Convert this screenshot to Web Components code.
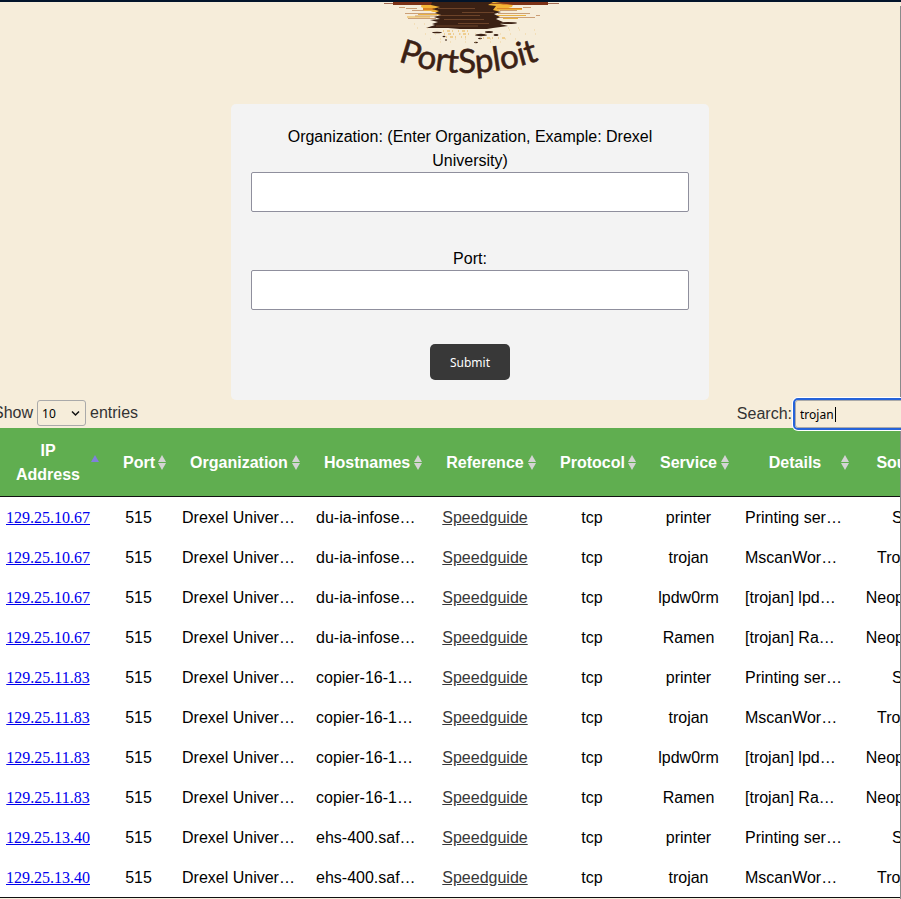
<!DOCTYPE html>
<html lang="en">
<head>
<meta charset="utf-8">
<title>PortSploit</title>
<style>
html { background: #f6edda; overflow: hidden; }
body { margin: 0; font-family: "Liberation Sans", Arial, sans-serif; font-size: 16px; line-height: 24px; color: #000; }
</style>
</head>
<body>
<port-page>
  <port-logo slot="brand"></port-logo>
  <lookup-form slot="form"></lookup-form>
  <results-table slot="results"></results-table>
</port-page>
<script>
function define(name, html, setup) {
  const template = document.createElement("template");
  template.innerHTML = html;
  customElements.define(name, class extends HTMLElement {
    constructor() {
      super();
      this.attachShadow({ mode: "open" }).append(template.content.cloneNode(true));
      if (setup) setup(this.shadowRoot);
    }
  });
}

define("port-page", `
<style>
:host { display: block; position: relative; overflow: hidden; min-height: 100vh; border-top: 2px solid #02142a; box-sizing: border-box; }
:host::after { content: ""; position: absolute; top: 4px; right: 0; bottom: 0; width: 1px; background: #8a8a8a; }
header { display: flex; flex-direction: column; align-items: center; margin-right: -39px; }
main { margin: 0 -51px 0 -9px; }
</style>
<header><slot name="brand"></slot><slot name="form"></slot></header>
<main><slot name="results"></slot></main>`);

define("port-logo", `
<style>
:host { display: block; height: 102px; }
svg { display: block; }
text { font-family: Lato, sans-serif; font-size: 33px; font-weight: 400; fill: #3b2114; stroke: #3b2114; stroke-width: 0.6; }
</style>
<svg width="200" height="86" viewBox="370 2 200 86" role="img" aria-label="PortSploit">
  <path fill="#f3b536" d="M422 2H514L512 7 501 10 496 12H433L421 7Z"/>
  <path fill="#dc8525" d="M425 2H437L430 4H421ZM506 3H519V5H500ZM423 8H434V10H423ZM497 8H522V9H497Z"/>
  <path fill="#7b3116" d="M393 2H432V5H393ZM495 2H548V5H513Z"/>
  <path stroke="#7b3116" stroke-width=".7" fill="none" d="M384 3.500H559"/>
  <path stroke="#c08a5c" fill="none" stroke-width=".8" d="M399 7.500H405M406 8.500H417M523 7.500H531M405 13.500H439M498 13.500H530M412 10.500H427M500 10.500H517M408 18.500H436M498 17.500H535M415 16H437M536 15.500H540"/>
  <path stroke="#e9b242" fill="none" d="M424 10.500H436M497 9.500H522M418 14.500H440M497 15.500H526M407 17H430M503 18.500H518"/>
  <path fill="#3b2114" d="M432 2H493L488 5 496 6 493 10 501 12 494 14 500 17 496 19 503 22 500 24 508 26 493 28 487 29H460L448 28 426 28 435 25 432 24 438 22 430 20 440 19 434 17 441 15 435 13 439 11 432 9 440 7 431 5Z"/>
  <g fill="#3b2114"><ellipse cx="508" cy="23" rx="9" ry="1"/><ellipse cx="437" cy="32.500" rx="5" ry=".8"/><ellipse cx="481" cy="35" rx="6" ry="1.200"/><ellipse cx="489" cy="32" rx="4" ry="1"/><ellipse cx="496" cy="35" rx="2.500" ry="1"/><ellipse cx="444" cy="36.500" rx="1.500" ry=".7"/><ellipse cx="446" cy="40" rx="1" ry=".8"/><ellipse cx="480" cy="38.500" rx="2" ry=".7"/><ellipse cx="476" cy="42.500" rx="2" ry=".7"/></g>
  <path stroke="#b97949" fill="none" stroke-width=".4" d="M438 8.500H475M439 15.500H480M444 19.500H484M436 26H478M462 12.500H494M458 23.500H489"/>
  <g stroke="#edc478" fill="none"><path stroke-width="1.500" stroke-dasharray="1 3 3 2 1 5" d="M443 31H472M444 34H470M446 37H466M483 38H505"/><path stroke-width=".7" stroke-dasharray="1 9 1 14" d="M414 24H433M417 28H430M508 28H530M425 34H540M430 39H523M440 42H515M509 30H542"/></g>
  <path id="arc" fill="none" d="M398 61Q469 86 546 58"/>
  <text><textPath href="#arc">PortSploit</textPath></text>
</svg>`);

define("lookup-form", `
<style>
:host { display: block; width: 478px; max-width: 100%; }
form { display: flex; flex-direction: column; gap: 34px; align-items: center; padding: 20px; background: #f3f3f3; border-radius: 5px; text-align: center; }
div { align-self: stretch; }
div + div { margin-top: 0; }
label { display: block; padding: 1px 20px 0; margin-bottom: -1px; }
input { display: block; width: 100%; height: 40px; box-sizing: border-box; border: 1px solid #8f8f9d; border-radius: 2px; background: #fff; padding: 0 10px; font: 12px "Noto Sans", sans-serif; }
button { height: 36px; padding: 0 20px; border: 0; border-radius: 5px; background: #383838; color: #fff; font: 12px "Noto Sans", sans-serif; }
</style>
<form>
  <div><label for="org">Organization: (Enter Organization, Example: Drexel University)</label><input id="org" type="text"></div>
  <div><label for="port">Port:</label><input id="port" type="text"></div>
  <button type="button">Submit</button>
</form>`);

define("sort-icon", `
<style>:host { display: block; width: 8px; height: 15px; } svg { display: block; }
path { fill: #d4d4d4; } :host([asc]) path { fill: #8080dd; } :host([asc]) .down { display: none; }</style>
<svg width="8" height="15" viewBox="0 0 8 15" aria-hidden="true"><path d="M0 7L4 0 8 7Z"/><path class="down" d="M0 8H8L4 15Z"/></svg>`);

const columns = [["IP Address", 114], ["Port", 67], ["Organization", 134], ["Hostnames", 122], ["Reference", 114], ["Protocol", 100], ["Service", 93], ["Details", 120], ["Source", 97]];
const hosts = [["129.25.10.67", "du-ia-infose…", 4], ["129.25.11.83", "copier-16-1…", 4], ["129.25.13.40", "ehs-400.saf…", 2]];
const services = [["printer", "Printing ser…", "SG"], ["trojan", "MscanWor…", "Trojans"], ["lpdw0rm", "[trojan] lpd…", "Neophasis"], ["Ramen", "[trojan] Ra…", "Neophasis"]];

define("results-table", `
<style>
:host { display: block; }
.tools { display: flex; justify-content: space-between; height: 28px; color: #333; }
.tools label { display: flex; align-items: center; height: 26px; }
.length { padding-left: 2px; gap: 4px; }
select { width: 49px; height: 26px; box-sizing: border-box; padding: 0 4px; border: 1px solid #aaa; border-radius: 3px; background: transparent; color: #000; font: 12px "Noto Sans", sans-serif; appearance: none; }
.pick { position: relative; display: block; height: 26px; }
.pick svg { position: absolute; right: 6px; top: 10px; pointer-events: none; }
.tools .search { height: 28px; gap: 3px; }
.find { position: relative; display: block; height: 28px; z-index: 1; }
.find input { display: block; width: 157px; height: 28px; box-sizing: border-box; padding: 0 4px; border: 1px solid #aaa; border-radius: 3px; outline: 2px solid #2563d9; box-shadow: 0 0 0 3px #fff; background: #f6edda; font: 12px "Noto Sans", sans-serif; color: #000; caret-color: transparent; }
.caret { position: absolute; left: 40px; top: 7px; width: 1px; height: 15px; background: #000; }
table { width: 100%; table-layout: fixed; border-collapse: separate; border-spacing: 0; border-bottom: 1px solid #111; background: #fff; }
th { position: relative; height: 66px; padding: 2px 18px 0; border-bottom: 1px solid #111; background: #60ae50; color: #fff; font-weight: bold; text-align: center; }
sort-icon { position: absolute; right: 6px; top: 27px; }
td { height: 38px; padding: 2px 10px 0; text-align: center; white-space: nowrap; }
.cut { text-align: left; }
.ip { font-family: "Liberation Serif", "Times New Roman", serif; color: #00e; }
.ref { color: #383838; }
</style>
<div class="tools">
  <label class="length">Show <span class="pick"><select aria-label="Entries per page"><option>10</option><option>25</option><option>50</option></select><svg width="9" height="7" viewBox="0 0 9 7"><path d="M1 1.500L4.500 5 8 1.500" fill="none" stroke="#111" stroke-width="1.500"/></svg></span> entries</label>
  <label class="search">Search: <span class="find"><input type="text" value="trojan"><span class="caret"></span></span></label>
</div>
<table><colgroup></colgroup><thead><tr></tr></thead><tbody></tbody></table>`, root => {
  root.querySelector("colgroup").innerHTML = columns.map(c => `<col style="width:${c[1]}px">`).join("");
  root.querySelector("thead tr").innerHTML = columns.map((c, i) => `<th scope="col">${c[0]}<sort-icon${i ? "" : " asc"}></sort-icon></th>`).join("");
  root.querySelector("tbody").innerHTML = hosts.flatMap(([ip, host, count]) => services.slice(0, count).map(([service, details, source]) =>
    `<tr><td><a class="ip" href="#${ip}">${ip}</a></td><td>515</td><td class="cut">Drexel Univer…</td><td class="cut">${host}</td><td><a class="ref" href="#speedguide">Speedguide</a></td><td>tcp</td><td>${service}</td><td class="cut">${details}</td><td>${source}</td></tr>`)).join("");
});
</script>
</body>
</html>
